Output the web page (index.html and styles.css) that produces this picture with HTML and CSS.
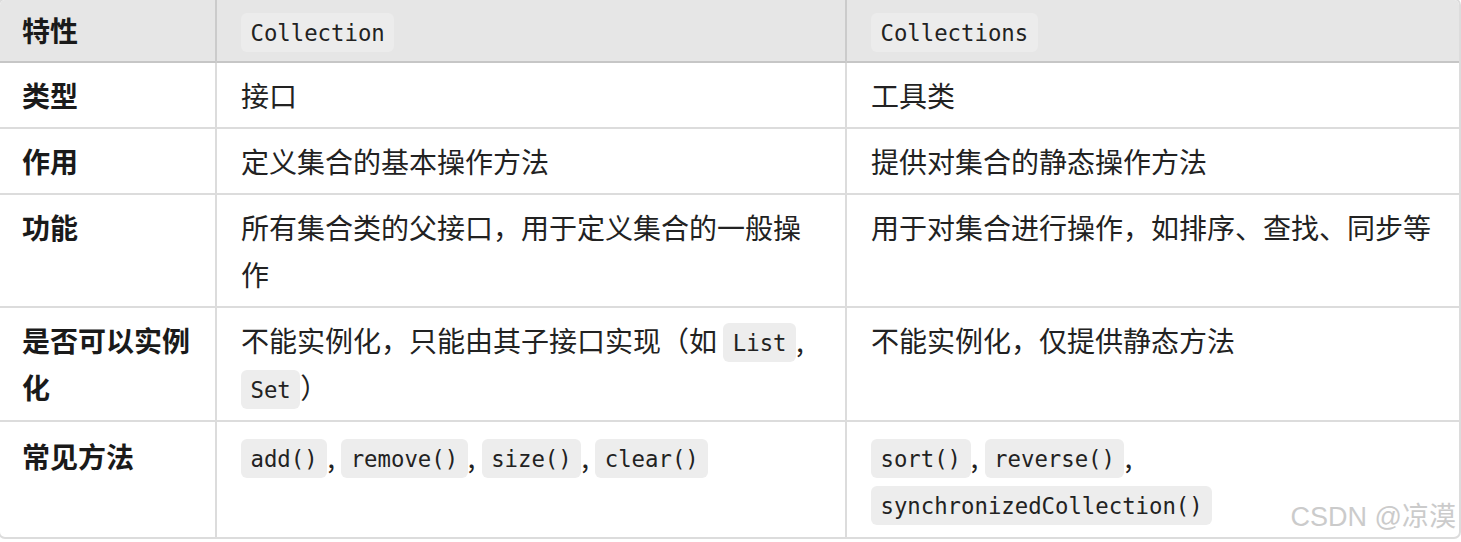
FILE: index.html
```html
<!DOCTYPE html>
<html lang="zh-CN">
<head>
<meta charset="utf-8">
<title>Collection vs Collections</title>
<link rel="stylesheet" href="styles.css">
</head>
<body>
<div class="table-wrap">
  <div class="grid">
    <div class="cell head label">特性</div>
    <div class="cell head"><code>Collection</code></div>
    <div class="cell head last"><code>Collections</code></div>

    <div class="cell label">类型</div>
    <div class="cell">接口</div>
    <div class="cell last">工具类</div>

    <div class="cell label">作用</div>
    <div class="cell">定义集合的基本操作方法</div>
    <div class="cell last">提供对集合的静态操作方法</div>

    <div class="cell label">功能</div>
    <div class="cell">所有集合类的父接口，用于定义集合的一般操作</div>
    <div class="cell last">用于对集合进行操作，如排序、查找、同步等</div>

    <div class="cell label tall">是否可以实例化</div>
    <div class="cell tall">不能实例化，只能由其子接口实现（如 <code>List</code>, <code>Set</code>）</div>
    <div class="cell last tall">不能实例化，仅提供静态方法</div>

    <div class="cell label bottom">常见方法</div>
    <div class="cell bottom"><code>add()</code>, <code>remove()</code>, <code>size()</code>, <code>clear()</code></div>
    <div class="cell bottom last"><code>sort()</code>, <code>reverse()</code>, <code>synchronizedCollection()</code></div>
  </div>
  <div class="watermark">CSDN @凉漠</div>
</div>
</body>
</html>
```
FILE: styles.css
```css
* { box-sizing: border-box; }

html, body {
  margin: 0;
  padding: 0;
  background: #ffffff;
}

body {
  font-family: "Noto Sans CJK SC", "Noto Sans", sans-serif;
  font-size: 28px;
  color: #222222;
  overflow: hidden;
}

.table-wrap {
  position: relative;
  width: calc(100% + 2px);
  margin: -2px 0 0 -2px;
  border: 2px solid #dcdcdc;
  border-radius: 7px;
  overflow: hidden;
}

.grid {
  display: grid;
  grid-template-columns: 217px 630px 1fr;
}

.cell {
  padding: 9px 24px 8px;
  line-height: 47px;
  border-right: 2px solid #dcdcdc;
  border-bottom: 2px solid #dcdcdc;
}

.cell.label {
  padding-left: 22px;
  font-weight: 700;
  color: #1a1a1a;
}

.cell.last { border-right: none; }
.cell.tall { padding-bottom: 9px; }
.cell.bottom { border-bottom: none; padding-top: 11px; padding-bottom: 10px; }

.cell.head {
  background: #e6e6e6;
  padding-top: 7px;
  padding-bottom: 7px;
  border-right-color: #cbcbcb;
  border-bottom-color: #c6c6c6;
}
.cell.head.last { border-right: none; }

code {
  font-family: "DejaVu Sans Mono", "Liberation Mono", monospace;
  font-size: 22.3px;
  line-height: 26px;
  vertical-align: 2px;
  background: #ededed;
  border-radius: 6px;
  padding: 6.5px 9.5px;
  color: #222222;
}

.head code { background: #ececec; }

.watermark {
  position: absolute;
  right: 3px;
  bottom: 5px;
  font-family: "Liberation Sans", "Noto Sans CJK SC", sans-serif;
  font-size: 27px;
  line-height: 30px;
  color: #cbcbcb;
}
```
